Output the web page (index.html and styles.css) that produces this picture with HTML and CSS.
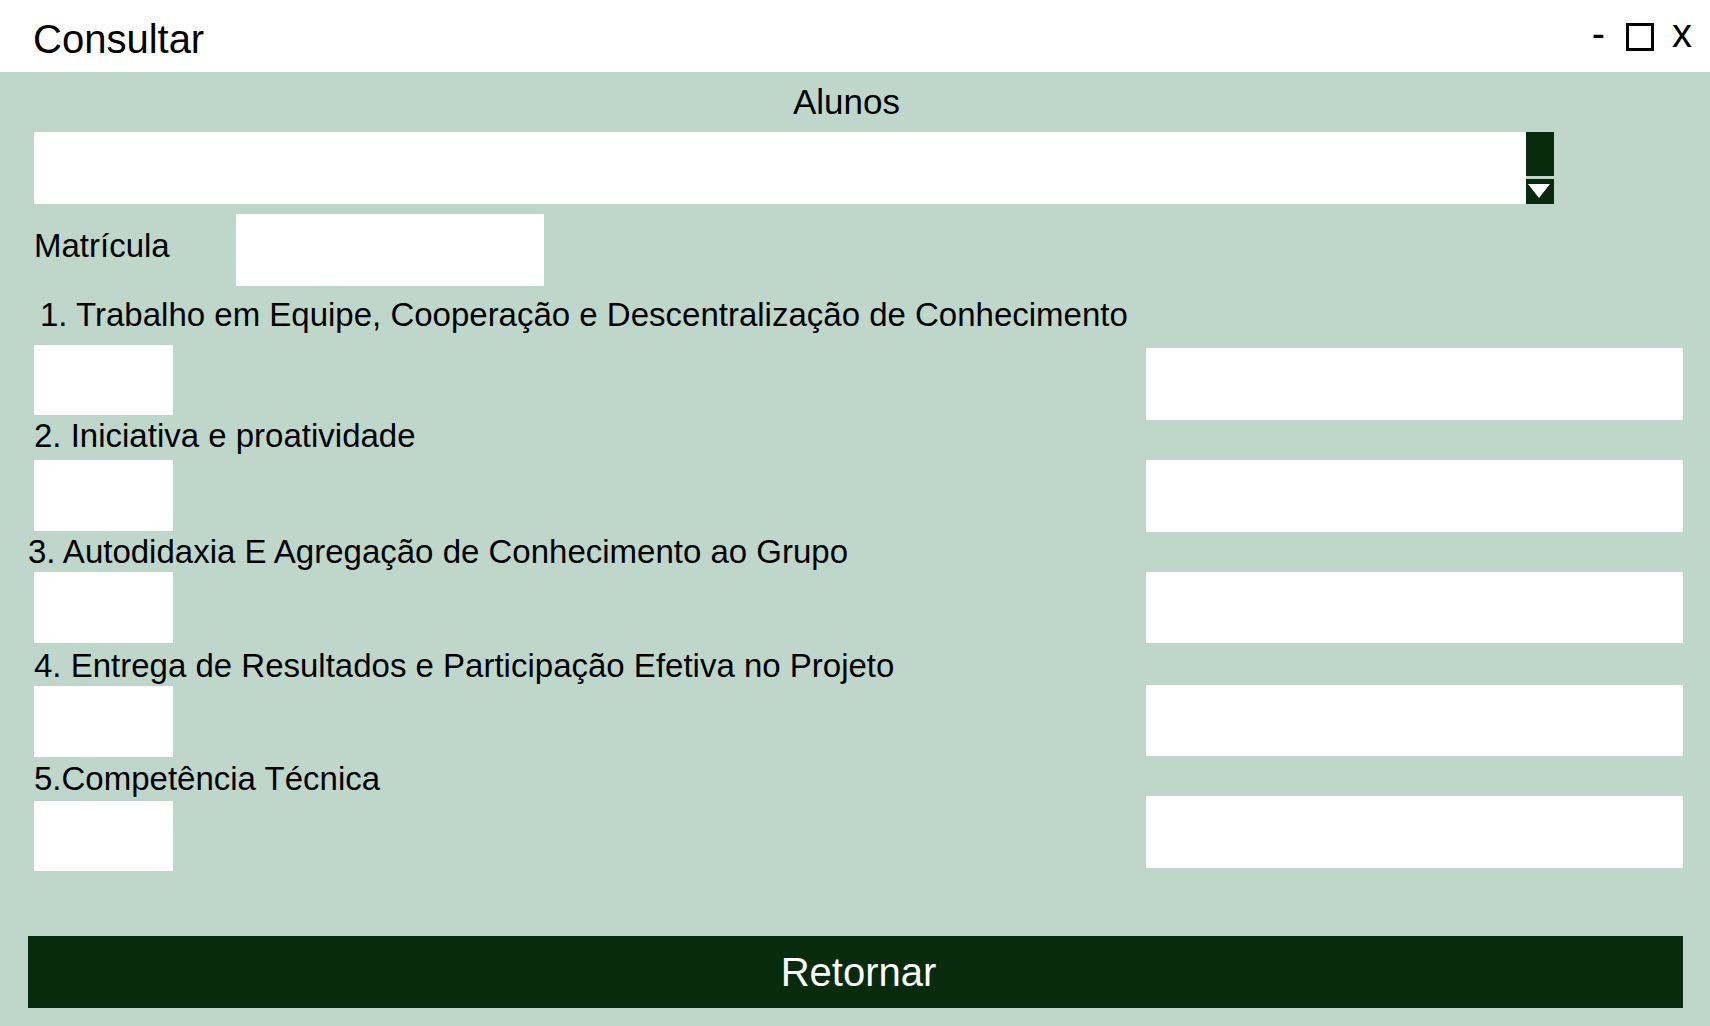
FILE: index.html
```html
<!DOCTYPE html>
<html lang="pt">
<head>
<meta charset="utf-8">
<title>Consultar</title>
<link rel="stylesheet" href="styles.css">
</head>
<body>
<div class="window">
  <header class="titlebar">
    <span class="title">Consultar</span>
    <div class="controls">
      <span class="ctl-min">-</span>
      <span class="ctl-max"></span>
      <span class="ctl-close">x</span>
    </div>
  </header>
  <main class="content">
    <div class="alunos-label">Alunos</div>
    <div class="combo">
      <div class="combo-input"></div>
      <div class="combo-btn">
        <div class="combo-btn-top"></div>
        <div class="combo-btn-bottom">
          <svg width="28" height="25" viewBox="0 0 28 25"><polygon points="2,5 24,5 13,19" fill="#ffffff"/></svg>
        </div>
      </div>
    </div>
    <div class="mat-row">
      <span class="mat-label">Matrícula</span>
      <div class="field mat-field"></div>
    </div>

    <div class="crit-label l1">1. Trabalho em Equipe, Cooperação e Descentralização de Conhecimento</div>
    <div class="crit-row r1"><div class="field small"></div><div class="field wide"></div></div>

    <div class="crit-label l2">2. Iniciativa e proatividade</div>
    <div class="crit-row r2"><div class="field small"></div><div class="field wide"></div></div>

    <div class="crit-label l3">3. Autodidaxia E Agregação de Conhecimento ao Grupo</div>
    <div class="crit-row r3"><div class="field small"></div><div class="field wide"></div></div>

    <div class="crit-label l4">4. Entrega de Resultados e Participação Efetiva no Projeto</div>
    <div class="crit-row r4"><div class="field small"></div><div class="field wide"></div></div>

    <div class="crit-label l5">5.Competência Técnica</div>
    <div class="crit-row r5"><div class="field small"></div><div class="field wide"></div></div>

    <button class="retornar">Retornar</button>
  </main>
</div>
</body>
</html>
```

FILE: styles.css
```css
* { box-sizing: border-box; }
html, body { margin: 0; padding: 0; }
body {
  width: 1710px;
  height: 1026px;
  overflow: hidden;
  font-family: "Liberation Sans", Arial, sans-serif;
  color: #000;
  background: #bfd7ca;
}
.window { width: 1710px; height: 1026px; display: flex; flex-direction: column; }

.titlebar {
  height: 72px;
  background: #ffffff;
  display: flex;
  justify-content: space-between;
  align-items: flex-start;
  padding: 0 18px 0 33px;
  flex: none;
}
.title {
  font-size: 40px;
  padding-top: 6px;
  line-height: 66px;
}
.controls {
  display: flex;
  align-items: flex-start;
  font-size: 40px;
  line-height: 66px;
}
.ctl-max {
  width: 28px;
  height: 28px;
  border: 3px solid #000;
  margin-top: 23px;
  margin-left: 21px;
}
.ctl-close { margin-left: 18px; }

.content {
  flex: 1;
  background: #bfd7ca;
  padding: 0 27px 0 34px;
  display: flex;
  flex-direction: column;
}
.alunos-label {
  height: 60px;
  line-height: 60px;
  font-size: 35px;
  text-align: center;
  padding-right: 24px;
}
.combo { display: flex; width: 1520px; height: 72px; }
.combo-input { flex: 1; background: #fff; }
.combo-btn { width: 28px; display: flex; flex-direction: column; }
.combo-btn-top { height: 44px; background: #072b0c; }
.combo-btn-bottom { height: 25px; margin-top: 3px; background: #072b0c; display: flex; }
.combo-btn-bottom svg { display: block; }

.field { background: #ffffff; }

.mat-row { display: flex; align-items: flex-start; margin-top: 10px; height: 72px; }
.mat-label { width: 202px; font-size: 33px; line-height: 64px; }
.mat-field { width: 308px; height: 72px; }

.crit-label { font-size: 33px; line-height: 28px; height: 28px; white-space: nowrap; }
.crit-row { display: flex; justify-content: space-between; align-items: flex-start; }
.small { width: 139px; }
.wide { width: 537px; }

.l1 { margin-top: 15px; padding-left: 6px; }
.r1 { margin-top: 16px; }
.r1 .small { height: 70px; }
.r1 .wide { height: 72px; margin-top: 3px; }

.l2 { margin-top: 2px; }
.r2 { margin-top: 10px; }
.r2 .small { height: 71px; }
.r2 .wide { height: 72px; }

.l3 { margin-top: 6px; margin-left: -6px; }
.r3 { margin-top: 6px; }
.r3 .small, .r3 .wide { height: 71px; }

.l4 { margin-top: 9px; }
.r4 { margin-top: 5px; }
.r4 .small { height: 71px; margin-top: 1px; }
.r4 .wide { height: 71px; }

.l5 { margin-top: 8px; }
.r5 { margin-top: 3px; }
.r5 .small { height: 70px; margin-top: 5px; }
.r5 .wide { height: 72px; }

.retornar {
  margin-top: 65px;
  margin-left: -6px;
  width: 1655px;
  height: 72px;
  border: 0;
  padding: 0 0 0 6px;
  background: #072b0c;
  color: #ffffff;
  font-family: "Liberation Sans", Arial, sans-serif;
  font-size: 40px;
  line-height: 72px;
  text-align: center;
}
```
